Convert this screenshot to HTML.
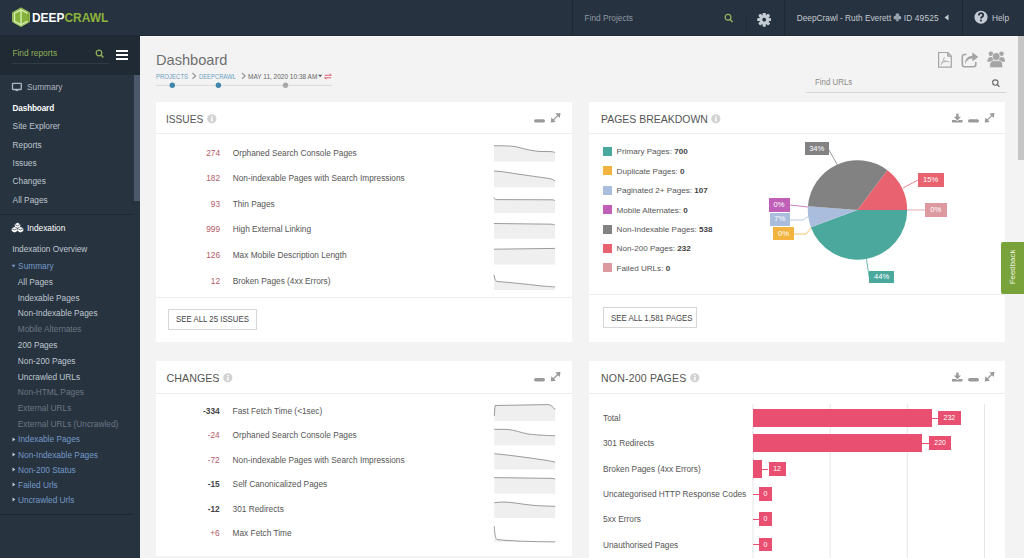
<!DOCTYPE html>
<html><head><meta charset="utf-8">
<style>
*{box-sizing:border-box;margin:0;padding:0}
html,body{width:1024px;height:558px;overflow:hidden;background:#f3f3f3;font-family:"Liberation Sans",sans-serif;position:relative}
.abs{position:absolute}
.t{position:absolute;white-space:nowrap;line-height:1}
svg{position:absolute;overflow:visible}
</style></head><body>
<div class="abs" style="left:0px;top:0px;width:1024px;height:36px;background:#26323f;"></div>
<div class="abs" style="left:0px;top:35px;width:1024px;height:1px;background:#222936;"></div>
<svg style="left:0;top:0" width="40" height="36">
<polygon points="21,7.9 29.4,12.6 29.4,21.8 21,26.5 12.6,21.8 12.6,12.6" fill="#79a332" stroke="#a3c963" stroke-width="1"/>
<polygon points="21,9.8 27.5,13.3 27.5,21.2 21,24.9 14.4,21.2 14.4,13.3" fill="#86b23c"/>
<path d="M27.6 13.4 L21 9.8 L14.4 13.4 L14.4 21.2 L21 24.9 L27.6 21.2" fill="none" stroke="#d3ecab" stroke-width="1.5"/>
<path d="M21 9.8 L21 24.9" stroke="#d3ecab" stroke-width="1.5"/>
</svg>
<div class="t" style="left:31.5px;top:12.00px;font-size:12.9px;color:#ffffff;font-weight:bold;transform:scaleX(0.925);transform-origin:0 0">DEEP<span style="color:#8db33a">CRAWL</span></div>
<div class="abs" style="left:572px;top:0px;width:1px;height:36px;background:#1e2831;"></div>
<div class="abs" style="left:746px;top:14px;width:1px;height:22px;background:#222c36;"></div>
<div class="abs" style="left:784px;top:0px;width:1px;height:36px;background:#1e2831;"></div>
<div class="abs" style="left:962px;top:0px;width:1px;height:36px;background:#1e2831;"></div>
<div class="t" style="left:584.6px;top:14.00px;font-size:8.3px;color:#8f98a2;font-weight:normal;">Find Projects</div>
<svg style="left:724px;top:13px" width="10" height="10" viewBox="0 0 10 10"><circle cx="4" cy="4.3" r="2.9" fill="none" stroke="#97b85e" stroke-width="1.2"/><path d="M6.1 6.4 L8.6 8.9" stroke="#97b85e" stroke-width="1.4"/></svg>
<svg style="left:0;top:0" width="1024" height="36"><g fill="#c3ccd5"><rect x="762.8" y="12.9" width="2.8" height="13.6" rx="0.6" transform="rotate(0 764.2 19.7)"/><rect x="762.8" y="12.9" width="2.8" height="13.6" rx="0.6" transform="rotate(45 764.2 19.7)"/><rect x="762.8" y="12.9" width="2.8" height="13.6" rx="0.6" transform="rotate(90 764.2 19.7)"/><rect x="762.8" y="12.9" width="2.8" height="13.6" rx="0.6" transform="rotate(135 764.2 19.7)"/><rect x="762.8" y="12.9" width="2.8" height="13.6" rx="0.6" transform="rotate(180 764.2 19.7)"/><rect x="762.8" y="12.9" width="2.8" height="13.6" rx="0.6" transform="rotate(225 764.2 19.7)"/><rect x="762.8" y="12.9" width="2.8" height="13.6" rx="0.6" transform="rotate(270 764.2 19.7)"/><rect x="762.8" y="12.9" width="2.8" height="13.6" rx="0.6" transform="rotate(315 764.2 19.7)"/><circle cx="764.2" cy="19.7" r="4.9"/></g><circle cx="764.2" cy="19.7" r="1.9" fill="#27323e"/></svg>
<div class="t" style="left:796.7px;top:14.00px;font-size:8.3px;color:#c3cad1;font-weight:normal;">DeepCrawl - Ruth Everett</div>
<svg style="left:0;top:0" width="1024" height="36"><g fill="#9aa4ae"><circle cx="897.4" cy="15.1" r="1.9"/><circle cx="895.4" cy="17.7" r="1.9"/><circle cx="899.4" cy="17.7" r="1.9"/><path d="M896.9 17 L897.9 17 L898.7 21.2 L896.1 21.2 Z"/></g></svg>
<div class="t" style="left:903.8px;top:14.00px;font-size:8.3px;color:#c3cad1;font-weight:normal;letter-spacing:0.15px">ID 49525</div>
<svg style="left:944px;top:14px" width="5" height="7" viewBox="0 0 5 7"><polygon points="4.5,0.5 4.5,6.5 0.5,3.5" fill="#c3cad1"/></svg>
<svg style="left:974px;top:10px" width="14" height="14" viewBox="0 0 14 14"><circle cx="7" cy="7.2" r="6.5" fill="#c3ccd5"/><path d="M4.9 5.4 Q4.9 3.2 7 3.2 Q9.2 3.2 9.2 5.2 Q9.2 6.5 7.7 7.1 Q7 7.4 7 8.6" fill="none" stroke="#27323e" stroke-width="1.8"/><rect x="6.1" y="9.6" width="1.8" height="1.8" fill="#27323e"/></svg>
<div class="t" style="left:992.0px;top:14.00px;font-size:8.3px;color:#c3cad1;font-weight:normal;">Help</div>
<div class="abs" style="left:0px;top:36px;width:140px;height:522px;background:#27333f;"></div>
<div class="abs" style="left:0px;top:36px;width:140px;height:39px;background:#1f2a34;"></div>
<div class="t" style="left:12.4px;top:49.00px;font-size:8.4px;color:#8fae58;font-weight:normal;">Find reports</div>
<svg style="left:95px;top:49px" width="10" height="10" viewBox="0 0 10 10"><circle cx="4" cy="4" r="2.8" fill="none" stroke="#97b85e" stroke-width="1.2"/><path d="M6 6 L8.4 8.4" stroke="#97b85e" stroke-width="1.4"/></svg>
<div class="abs" style="left:12px;top:63px;width:97px;height:1px;background:#2f3b47;"></div>
<div class="abs" style="left:116px;top:50px;width:12px;height:2px;background:#ffffff;"></div>
<div class="abs" style="left:116px;top:54px;width:12px;height:2px;background:#ffffff;"></div>
<div class="abs" style="left:116px;top:58px;width:12px;height:2px;background:#ffffff;"></div>
<div class="abs" style="left:134px;top:75px;width:6px;height:126px;background:#4b596b;"></div>
<svg style="left:11px;top:82px" width="12" height="10" viewBox="0 0 12 10"><rect x="1.5" y="1.4" width="8.8" height="6.1" rx="0.5" fill="none" stroke="#aeb8c2" stroke-width="1.3"/><rect x="4.6" y="7.6" width="2.6" height="1.5" fill="#aeb8c2"/></svg>
<div class="t" style="left:27.0px;top:83.00px;font-size:8.3px;color:#aeb7c0;font-weight:normal;">Summary</div>
<div class="t" style="left:12.6px;top:105.00px;font-size:8.2px;color:#ffffff;font-weight:bold;letter-spacing:-0.15px">Dashboard</div>
<div class="t" style="left:12.6px;top:122.00px;font-size:8.3px;color:#bfc7cf;font-weight:normal;">Site Explorer</div>
<div class="t" style="left:12.6px;top:141.00px;font-size:8.3px;color:#bfc7cf;font-weight:normal;">Reports</div>
<div class="t" style="left:12.6px;top:159.00px;font-size:8.3px;color:#bfc7cf;font-weight:normal;">Issues</div>
<div class="t" style="left:12.6px;top:177.00px;font-size:8.3px;color:#bfc7cf;font-weight:normal;">Changes</div>
<div class="t" style="left:12.6px;top:196.00px;font-size:8.3px;color:#bfc7cf;font-weight:normal;">All Pages</div>
<div class="abs" style="left:0px;top:214px;width:132px;height:1px;background:#1f2932;"></div>
<svg style="left:11px;top:222px" width="13" height="11" viewBox="0 0 13 11">
<path d="M6.5 0.8 L9.3 2.2 L9.3 4.6 L6.5 6 L3.7 4.6 L3.7 2.2 Z" fill="#fff"/>
<path d="M3.5 4.9 L6.4 6.3 L6.4 9 L3.5 10.4 L0.7 9 L0.7 6.3 Z" fill="#fff"/>
<path d="M9.5 4.9 L12.3 6.3 L12.3 9 L9.5 10.4 L6.6 9 L6.6 6.3 Z" fill="#fff"/>
<path d="M3.7 2.4 L6.5 3.8 L9.3 2.4 M0.7 6.5 L3.5 7.9 L6.4 6.5 M6.6 6.5 L9.5 7.9 L12.3 6.5" fill="none" stroke="#27333f" stroke-width="0.7"/>
</svg>
<div class="t" style="left:27.0px;top:224.00px;font-size:8.3px;color:#ffffff;font-weight:normal;">Indexation</div>
<div class="t" style="left:12.2px;top:245.00px;font-size:8.3px;color:#bfc7cf;font-weight:normal;">Indexation Overview</div>
<svg style="left:11px;top:264px" width="5" height="4" viewBox="0 0 5 4"><polygon points="0.5,0.8 4.5,0.8 2.5,3.4" fill="#7296c6"/></svg>
<div class="t" style="left:18.1px;top:262.00px;font-size:8.3px;color:#7599c9;font-weight:normal;">Summary</div>
<div class="t" style="left:17.8px;top:278.00px;font-size:8.3px;color:#bfc7cf;font-weight:normal;">All Pages</div>
<div class="t" style="left:17.8px;top:294.00px;font-size:8.3px;color:#bfc7cf;font-weight:normal;">Indexable Pages</div>
<div class="t" style="left:17.8px;top:309.00px;font-size:8.3px;color:#bfc7cf;font-weight:normal;">Non-Indexable Pages</div>
<div class="t" style="left:17.8px;top:325.00px;font-size:8.3px;color:#6c7784;font-weight:normal;">Mobile Alternates</div>
<div class="t" style="left:17.8px;top:341.00px;font-size:8.3px;color:#bfc7cf;font-weight:normal;">200 Pages</div>
<div class="t" style="left:17.8px;top:357.00px;font-size:8.3px;color:#bfc7cf;font-weight:normal;">Non-200 Pages</div>
<div class="t" style="left:17.8px;top:373.00px;font-size:8.3px;color:#bfc7cf;font-weight:normal;">Uncrawled URLs</div>
<div class="t" style="left:17.8px;top:388.00px;font-size:8.3px;color:#6c7784;font-weight:normal;">Non-HTML Pages</div>
<div class="t" style="left:17.8px;top:404.00px;font-size:8.3px;color:#6c7784;font-weight:normal;">External URLs</div>
<div class="t" style="left:17.8px;top:420.00px;font-size:8.3px;color:#6c7784;font-weight:normal;">External URLs (Uncrawled)</div>
<svg style="left:11.5px;top:436.6px" width="4" height="5" viewBox="0 0 4 5"><polygon points="0.5,0.5 3.3,2.5 0.5,4.5" fill="#c3ccd5"/></svg>
<div class="t" style="left:18.1px;top:435.00px;font-size:8.3px;color:#7599c9;font-weight:normal;">Indexable Pages</div>
<svg style="left:11.5px;top:452.0px" width="4" height="5" viewBox="0 0 4 5"><polygon points="0.5,0.5 3.3,2.5 0.5,4.5" fill="#c3ccd5"/></svg>
<div class="t" style="left:18.1px;top:451.00px;font-size:8.3px;color:#7599c9;font-weight:normal;">Non-Indexable Pages</div>
<svg style="left:11.5px;top:467.2px" width="4" height="5" viewBox="0 0 4 5"><polygon points="0.5,0.5 3.3,2.5 0.5,4.5" fill="#c3ccd5"/></svg>
<div class="t" style="left:18.1px;top:466.00px;font-size:8.3px;color:#7599c9;font-weight:normal;">Non-200 Status</div>
<svg style="left:11.5px;top:482.2px" width="4" height="5" viewBox="0 0 4 5"><polygon points="0.5,0.5 3.3,2.5 0.5,4.5" fill="#c3ccd5"/></svg>
<div class="t" style="left:18.1px;top:481.00px;font-size:8.3px;color:#7599c9;font-weight:normal;">Failed Urls</div>
<svg style="left:11.5px;top:497.4px" width="4" height="5" viewBox="0 0 4 5"><polygon points="0.5,0.5 3.3,2.5 0.5,4.5" fill="#c3ccd5"/></svg>
<div class="t" style="left:18.1px;top:496.00px;font-size:8.3px;color:#7599c9;font-weight:normal;">Uncrawled Urls</div>
<div class="abs" style="left:0px;top:514px;width:132px;height:1px;background:#1f2932;"></div>
<div class="t" style="left:156.0px;top:53.00px;font-size:14.6px;color:#707070;font-weight:normal;">Dashboard</div>
<div class="t" style="left:155.9px;top:74.00px;font-size:6.8px;color:#6b9ec0;font-weight:normal;transform:scaleX(0.885);transform-origin:0 0">PROJECTS</div>
<div class="t" style="left:198.8px;top:74.00px;font-size:6.8px;color:#6b9ec0;font-weight:normal;transform:scaleX(0.86);transform-origin:0 0">DEEPCRAWL</div>
<svg style="left:0;top:0" width="1024" height="100">
<path d="M192.5 73 L195.6 75.9 L192.5 78.8" fill="none" stroke="#999" stroke-width="1.3"/>
<path d="M242 73 L245.1 75.9 L242 78.8" fill="none" stroke="#999" stroke-width="1.3"/>
<polygon points="318.2,74.8 322.2,74.8 320.2,77.2" fill="#555"/>
<path d="M324.8 75.3 L331.2 75.3 M324.8 77.8 L331.2 77.8" stroke="#e06070" stroke-width="1.1"/>
<path d="M329.5 73.8 L331.6 75.3 M326.5 79.3 L324.4 77.8" stroke="#e06070" stroke-width="0.9"/>
<line x1="156" y1="85.3" x2="332" y2="85.3" stroke="#dedede" stroke-width="1.2"/>
<circle cx="172.3" cy="85.3" r="2.7" fill="#3f86ab"/>
<circle cx="218.4" cy="85.3" r="2.7" fill="#3f86ab"/>
<circle cx="285.5" cy="85.3" r="2.7" fill="#a8a8a8"/>
</svg>
<div class="t" style="left:247.9px;top:74.00px;font-size:6.8px;color:#666;font-weight:normal;transform:scaleX(0.955);transform-origin:0 0">MAY 11, 2020 10:38 AM</div>
<svg style="left:0;top:0" width="1024" height="100">
<path d="M938.6 52.5 L948 52.5 L951.3 56 L951.3 67.2 L938.6 67.2 Z" fill="none" stroke="#a5a5a5" stroke-width="1.2"/>
<path d="M947.6 52.5 L947.6 56.3 L951.3 56.3" fill="#bdbdbd" stroke="#a5a5a5" stroke-width="1"/>
<path d="M944.5 57 Q943 62 940.8 65 M944 60.5 Q947 62 949.5 62 M941.5 62.5 Q945 62 946.5 61" fill="none" stroke="#a5a5a5" stroke-width="0.8"/>
<path d="M966.5 54.5 L964.5 54.5 Q962.3 54.5 962.3 56.7 L962.3 64.6 Q962.3 66.8 964.5 66.8 L973.6 66.8 Q975.8 66.8 975.8 64.6 L975.8 62" fill="none" stroke="#a5a5a5" stroke-width="1.6"/>
<path d="M965 64.5 Q964.8 56.2 972.3 55.8 L972.3 52.3 L978.3 57 L972.3 61.6 L972.3 58.6 Q967.3 58.6 965 64.5 Z" fill="#a5a5a5"/>
<circle cx="990.9" cy="53.8" r="2.3" fill="#a5a5a5"/>
<circle cx="1001.5" cy="53.8" r="2.3" fill="#a5a5a5"/>
<path d="M987.3 61.8 Q987.3 57 990.9 57 Q993.5 57 994 59 L994 61.8 Z" fill="#a5a5a5"/>
<path d="M1005.1 61.8 Q1005.1 57 1001.5 57 Q998.9 57 998.4 59 L998.4 61.8 Z" fill="#a5a5a5"/>
<circle cx="996.2" cy="56.6" r="4.2" fill="#f3f3f3"/>
<circle cx="996.2" cy="56.6" r="3.5" fill="#a5a5a5"/>
<path d="M989.7 67.8 L989.7 65 Q989.7 60.6 994 60.6 L998.4 60.6 Q1002.7 60.6 1002.7 65 L1002.7 67.8 Z" fill="#a5a5a5" stroke="#f3f3f3" stroke-width="0.8"/>
<circle cx="995.3" cy="82.6" r="2.7" fill="none" stroke="#6a6a6a" stroke-width="1.1"/>
<path d="M997.3 84.6 L999.4 86.7" stroke="#6a6a6a" stroke-width="1.3"/>
</svg>
<div class="t" style="left:814.5px;top:78.00px;font-size:8.3px;color:#8a8a8a;font-weight:normal;transform:scaleX(0.95);transform-origin:0 0">Find URLs</div>
<div class="abs" style="left:806px;top:92px;width:200px;height:1px;background:#d4d4d4;"></div>
<div class="abs" style="left:140px;top:36px;width:884px;height:1px;background:#f8f9fb;"></div>
<div class="abs" style="left:1018px;top:36px;width:6px;height:124px;background:#c6c6c6;"></div>

<div class="abs" style="left:156px;top:102px;width:416px;height:240px;background:#ffffff;"></div>
<div class="abs" style="left:156px;top:133px;width:416px;height:1px;background:#ececec;"></div>
<div class="t" style="left:166.3px;top:114.00px;font-size:10.7px;color:#555;font-weight:normal;transform:scaleX(0.95);transform-origin:0 0">ISSUES</div>
<svg style="left:207px;top:114.2px" width="10" height="10" viewBox="0 0 10 10"><circle cx="4.8" cy="4.8" r="4.6" fill="#d2d2d2"/><rect x="4.1" y="4" width="1.5" height="3.6" fill="#fff"/><rect x="4.1" y="2" width="1.5" height="1.3" fill="#fff"/></svg>
<svg style="left:0;top:0" width="1024" height="558"><g fill="#9a9a9a"><rect x="534" y="119.2" width="11" height="3.4" rx="1.7"/><path d="M552.2 121.1 L559.0 114.4" stroke="#9a9a9a" stroke-width="1.3"/><polygon points="560.5,112.9 555.3,113.6 559.8,118.1"/><polygon points="550.7,122.6 555.9,121.9 551.4,117.4"/></g></svg>
<div class="t" style="right:804.0px;top:149.00px;font-size:8.3px;color:#b25a68;font-weight:normal;">274</div>
<div class="t" style="left:232.7px;top:149.00px;font-size:8.3px;color:#555;font-weight:normal;">Orphaned Search Console Pages</div>
<div class="t" style="right:804.0px;top:174.00px;font-size:8.3px;color:#b25a68;font-weight:normal;">182</div>
<div class="t" style="left:232.7px;top:174.00px;font-size:8.3px;color:#555;font-weight:normal;">Non-indexable Pages with Search Impressions</div>
<div class="t" style="right:804.0px;top:200.00px;font-size:8.3px;color:#b25a68;font-weight:normal;">93</div>
<div class="t" style="left:232.7px;top:200.00px;font-size:8.3px;color:#555;font-weight:normal;">Thin Pages</div>
<div class="t" style="right:804.0px;top:225.00px;font-size:8.3px;color:#b25a68;font-weight:normal;">999</div>
<div class="t" style="left:232.7px;top:225.00px;font-size:8.3px;color:#555;font-weight:normal;">High External Linking</div>
<div class="t" style="right:804.0px;top:251.00px;font-size:8.3px;color:#b25a68;font-weight:normal;">126</div>
<div class="t" style="left:232.7px;top:251.00px;font-size:8.3px;color:#555;font-weight:normal;">Max Mobile Description Length</div>
<div class="t" style="right:804.0px;top:277.00px;font-size:8.3px;color:#b25a68;font-weight:normal;">12</div>
<div class="t" style="left:232.7px;top:277.00px;font-size:8.3px;color:#555;font-weight:normal;">Broken Pages (4xx Errors)</div>
<svg style="left:0;top:0" width="1024" height="558"><path d="M494 145.8 C505 145.6 512 146 517 147 C525 149 532 151 540 151.5 L551 151.6 C553 151.7 554 152.2 555 152.6 L555 161.5 L494 161.5 Z" fill="#efefef"/><path d="M494 145.8 C505 145.6 512 146 517 147 C525 149 532 151 540 151.5 L551 151.6 C553 151.7 554 152.2 555 152.6" fill="none" stroke="#9b9b9b" stroke-width="1"/><path d="M494 171.1 C502 171.3 510 173 521 174.5 C533 176.3 543 177.5 549 178.5 C552 179 554 180 555 181 L555 187.3 L494 187.3 Z" fill="#efefef"/><path d="M494 171.1 C502 171.3 510 173 521 174.5 C533 176.3 543 177.5 549 178.5 C552 179 554 180 555 181" fill="none" stroke="#9b9b9b" stroke-width="1"/><path d="M494 197.4 C494.5 199 495 199.5 497 199.6 L552 199.8 C553.5 199.9 554.5 200.3 555 200.7 L555 213 L494 213 Z" fill="#efefef"/><path d="M494 197.4 C494.5 199 495 199.5 497 199.6 L552 199.8 C553.5 199.9 554.5 200.3 555 200.7" fill="none" stroke="#9b9b9b" stroke-width="1"/><path d="M494 223.5 L552 224.2 C553.5 224.5 554.3 224.9 555 225.1 L555 238.7 L494 238.7 Z" fill="#efefef"/><path d="M494 223.5 L552 224.2 C553.5 224.5 554.3 224.9 555 225.1" fill="none" stroke="#9b9b9b" stroke-width="1"/><path d="M494 249.2 L555 248.4 L555 264.4 L494 264.4 Z" fill="#efefef"/><path d="M494 249.2 L555 248.4" fill="none" stroke="#9b9b9b" stroke-width="1"/><path d="M494 274.7 C494.6 278 495 281 497 281.5 C510 282.5 525 284 540 285.8 C548 286.5 552 286.7 555 286.9 L555 290 L494 290 Z" fill="#efefef"/><path d="M494 274.7 C494.6 278 495 281 497 281.5 C510 282.5 525 284 540 285.8 C548 286.5 552 286.7 555 286.9" fill="none" stroke="#9b9b9b" stroke-width="1"/></svg>
<div class="abs" style="left:156px;top:297px;width:416px;height:1px;background:#ededed;"></div>
<div class="abs" style="left:168px;top:309px;width:89px;height:21px;background:#ffffff;border:1px solid #d6d6d6"></div>
<div class="t" style="left:176.3px;top:315.00px;font-size:8.6px;color:#444;font-weight:normal;transform:scaleX(0.913);transform-origin:0 0">SEE ALL 25 ISSUES</div>
<div class="abs" style="left:589px;top:102px;width:416px;height:240px;background:#ffffff;"></div>
<div class="abs" style="left:589px;top:133px;width:416px;height:1px;background:#ececec;"></div>
<div class="t" style="left:600.8px;top:114.00px;font-size:10.7px;color:#555;font-weight:normal;transform:scaleX(0.98);transform-origin:0 0">PAGES BREAKDOWN</div>
<svg style="left:711px;top:114.2px" width="10" height="10" viewBox="0 0 10 10"><circle cx="4.8" cy="4.8" r="4.6" fill="#d2d2d2"/><rect x="4.1" y="4" width="1.5" height="3.6" fill="#fff"/><rect x="4.1" y="2" width="1.5" height="1.3" fill="#fff"/></svg>
<svg style="left:0;top:0" width="1024" height="558"><g fill="#9a9a9a"><rect x="968" y="119.2" width="11" height="3.4" rx="1.7"/><path d="M986.2 121.1 L993.0 114.4" stroke="#9a9a9a" stroke-width="1.3"/><polygon points="994.5,112.9 989.3,113.6 993.8,118.1"/><polygon points="984.7,122.6 989.9,121.9 985.4,117.4"/><rect x="956.2" y="113.7" width="2.4" height="4.5"/><polygon points="953.8,116.7 961.0,116.7 957.4,120.4"/><path d="M952.0 120.1 L956.0 120.1 L957.4 121.3 L958.8 120.1 L962.5 120.1 L962.5 122.6 L952.0 122.6 Z"/></g></svg>
<div class="abs" style="left:602.5px;top:146.9px;width:9px;height:9px;background:#4ba89c;"></div>
<div class="t" style="left:616.6px;top:148.00px;font-size:8.1px;color:#555;font-weight:normal;">Primary Pages: <b style="color:#444">700</b></div>
<div class="abs" style="left:602.5px;top:166.3px;width:9px;height:9px;background:#f2b43f;"></div>
<div class="t" style="left:616.6px;top:168.00px;font-size:8.1px;color:#555;font-weight:normal;">Duplicate Pages: <b style="color:#444">0</b></div>
<div class="abs" style="left:602.5px;top:185.7px;width:9px;height:9px;background:#abbddd;"></div>
<div class="t" style="left:616.6px;top:187.00px;font-size:8.1px;color:#555;font-weight:normal;">Paginated 2+ Pages: <b style="color:#444">107</b></div>
<div class="abs" style="left:602.5px;top:205.1px;width:9px;height:9px;background:#c05fb8;"></div>
<div class="t" style="left:616.6px;top:207.00px;font-size:8.1px;color:#555;font-weight:normal;">Mobile Alternates: <b style="color:#444">0</b></div>
<div class="abs" style="left:602.5px;top:224.5px;width:9px;height:9px;background:#828282;"></div>
<div class="t" style="left:616.6px;top:226.00px;font-size:8.1px;color:#555;font-weight:normal;">Non-Indexable Pages: <b style="color:#444">538</b></div>
<div class="abs" style="left:602.5px;top:243.9px;width:9px;height:9px;background:#e8636f;"></div>
<div class="t" style="left:616.6px;top:245.00px;font-size:8.1px;color:#555;font-weight:normal;">Non-200 Pages: <b style="color:#444">232</b></div>
<div class="abs" style="left:602.5px;top:263.3px;width:9px;height:9px;background:#dc9aa0;"></div>
<div class="t" style="left:616.6px;top:265.00px;font-size:8.1px;color:#555;font-weight:normal;">Failed URLs: <b style="color:#444">0</b></div>
<svg style="left:0;top:0" width="1024" height="558"><path d="M857.5 210 L907.20 210.00 A49.7 49.7 0 0 1 810.86 227.16 Z" fill="#4ba89c"/><path d="M857.5 210 L810.86 227.16 A49.7 49.7 0 0 1 807.93 206.34 Z" fill="#abbddd"/><path d="M857.5 210 L807.93 206.34 A49.7 49.7 0 0 1 887.44 170.33 Z" fill="#828282"/><path d="M857.5 210 L887.44 170.33 A49.7 49.7 0 0 1 907.20 210.00 Z" fill="#e8636f"/><path d="M829 150 L838 166" stroke="#828282" stroke-width="0.8" fill="none"/><path d="M918 180 L903 188" stroke="#e8636f" stroke-width="0.8" fill="none"/><path d="M907 210 L925 210" stroke="#dc9aa0" stroke-width="0.8" fill="none"/><path d="M790 205 L808 207" stroke="#c05fb8" stroke-width="0.8" fill="none"/><path d="M790 220 L803 220 L809 216" stroke="#abbddd" stroke-width="0.8" fill="none"/><path d="M794 234 L806 234 L811 228" stroke="#f2b43f" stroke-width="0.8" fill="none"/><path d="M866.5 259 L869 277" stroke="#4ba89c" stroke-width="0.8" fill="none"/></svg>
<div class="abs" style="left:804.5px;top:142px;width:24.5px;height:13px;background:#828282;"></div>
<div class="t" style="left:804.5px;top:142px;width:24.5px;height:13px;line-height:13px;text-align:center;font-size:7.6px;color:#fff">34%</div>
<div class="abs" style="left:917.8px;top:173px;width:25.8px;height:13.5px;background:#e8636f;"></div>
<div class="t" style="left:917.8px;top:173px;width:25.8px;height:13.5px;line-height:13.5px;text-align:center;font-size:7.6px;color:#fff">15%</div>
<div class="abs" style="left:925px;top:203px;width:21.5px;height:13.6px;background:#dc9aa0;"></div>
<div class="t" style="left:925px;top:203px;width:21.5px;height:13.6px;line-height:13.6px;text-align:center;font-size:7.6px;color:#fff">0%</div>
<div class="abs" style="left:768.6px;top:198px;width:21px;height:13.8px;background:#c05fb8;"></div>
<div class="t" style="left:768.6px;top:198px;width:21px;height:13.8px;line-height:13.8px;text-align:center;font-size:7.6px;color:#fff">0%</div>
<div class="abs" style="left:769.5px;top:213.2px;width:20.5px;height:12.8px;background:#abbddd;"></div>
<div class="t" style="left:769.5px;top:213.2px;width:20.5px;height:12.8px;line-height:12.8px;text-align:center;font-size:7.6px;color:#fff">7%</div>
<div class="abs" style="left:773px;top:227px;width:21px;height:13px;background:#f2b43f;"></div>
<div class="t" style="left:773px;top:227px;width:21px;height:13px;line-height:13px;text-align:center;font-size:7.6px;color:#fff">0%</div>
<div class="abs" style="left:869px;top:270.6px;width:25.3px;height:12.9px;background:#4ba89c;"></div>
<div class="t" style="left:869px;top:270.6px;width:25.3px;height:12.9px;line-height:12.9px;text-align:center;font-size:7.6px;color:#fff">44%</div>
<div class="abs" style="left:589px;top:294px;width:416px;height:1px;background:#ededed;"></div>
<div class="abs" style="left:603px;top:307px;width:94px;height:21px;background:#ffffff;border:1px solid #d6d6d6"></div>
<div class="t" style="left:610.7px;top:314.00px;font-size:8.6px;color:#444;font-weight:normal;transform:scaleX(0.913);transform-origin:0 0">SEE ALL 1,581 PAGES</div>
<div class="abs" style="left:156px;top:361px;width:416px;height:195px;background:#ffffff;"></div>
<div class="abs" style="left:156px;top:393px;width:416px;height:1px;background:#ececec;"></div>
<div class="t" style="left:166.6px;top:373.00px;font-size:10.7px;color:#555;font-weight:normal;transform:scaleX(1.0);transform-origin:0 0">CHANGES</div>
<svg style="left:222.6px;top:373.4px" width="10" height="10" viewBox="0 0 10 10"><circle cx="4.8" cy="4.8" r="4.6" fill="#d2d2d2"/><rect x="4.1" y="4" width="1.5" height="3.6" fill="#fff"/><rect x="4.1" y="2" width="1.5" height="1.3" fill="#fff"/></svg>
<svg style="left:0;top:0" width="1024" height="558"><g fill="#9a9a9a"><rect x="534" y="378.1" width="11" height="3.4" rx="1.7"/><path d="M552.2 380.0 L559.0 373.3" stroke="#9a9a9a" stroke-width="1.3"/><polygon points="560.5,371.8 555.3,372.5 559.8,377.0"/><polygon points="550.7,381.5 555.9,380.8 551.4,376.3"/></g></svg>
<div class="t" style="right:804.3px;top:407.00px;font-size:8.3px;color:#444;font-weight:bold;">-334</div>
<div class="t" style="left:232.6px;top:407.00px;font-size:8.3px;color:#555;font-weight:normal;">Fast Fetch Time (&lt;1sec)</div>
<div class="t" style="right:804.3px;top:431.00px;font-size:8.3px;color:#b25a68;font-weight:normal;">-24</div>
<div class="t" style="left:232.6px;top:431.00px;font-size:8.3px;color:#555;font-weight:normal;">Orphaned Search Console Pages</div>
<div class="t" style="right:804.3px;top:456.00px;font-size:8.3px;color:#b25a68;font-weight:normal;">-72</div>
<div class="t" style="left:232.6px;top:456.00px;font-size:8.3px;color:#555;font-weight:normal;">Non-indexable Pages with Search Impressions</div>
<div class="t" style="right:804.3px;top:480.00px;font-size:8.3px;color:#444;font-weight:bold;">-15</div>
<div class="t" style="left:232.6px;top:480.00px;font-size:8.3px;color:#555;font-weight:normal;">Self Canonicalized Pages</div>
<div class="t" style="right:804.3px;top:505.00px;font-size:8.3px;color:#444;font-weight:bold;">-12</div>
<div class="t" style="left:232.6px;top:505.00px;font-size:8.3px;color:#555;font-weight:normal;">301 Redirects</div>
<div class="t" style="right:804.3px;top:529.00px;font-size:8.3px;color:#b25a68;font-weight:normal;">+6</div>
<div class="t" style="left:232.6px;top:529.00px;font-size:8.3px;color:#555;font-weight:normal;">Max Fetch Time</div>
<svg style="left:0;top:0" width="1024" height="558"><path d="M494.3 416 L495 405.5 L548 404.6 C551 405 553 407 555.2 409.6 L555.2 421 L494.3 421 Z" fill="#efefef"/><path d="M494.3 416 L495 405.5 L548 404.6 C551 405 553 407 555.2 409.6" fill="none" stroke="#9b9b9b" stroke-width="1"/><path d="M494.3 429.3 L507 429.4 C515 430 520 432.5 528 434 C540 435.3 548 435.5 555.2 435.8 L555.2 445.3 L494.3 445.3 Z" fill="#efefef"/><path d="M494.3 429.3 L507 429.4 C515 430 520 432.5 528 434 C540 435.3 548 435.5 555.2 435.8" fill="none" stroke="#9b9b9b" stroke-width="1"/><path d="M494.3 453.7 C510 455 530 458 546 460.3 C550 461 553 461.5 555.2 462.3 L555.2 469.5 L494.3 469.5 Z" fill="#efefef"/><path d="M494.3 453.7 C510 455 530 458 546 460.3 C550 461 553 461.5 555.2 462.3" fill="none" stroke="#9b9b9b" stroke-width="1"/><path d="M494.3 477.6 L552 478.4 C553.5 478.6 554.5 478.8 555.2 479 L555.2 493.8 L494.3 493.8 Z" fill="#efefef"/><path d="M494.3 477.6 L552 478.4 C553.5 478.6 554.5 478.8 555.2 479" fill="none" stroke="#9b9b9b" stroke-width="1"/><path d="M494.3 502.8 C500 501.8 507 501.8 515 503 C525 504.5 535 505.8 545 506 L555.2 506.3 L555.2 518 L494.3 518 Z" fill="#efefef"/><path d="M494.3 502.8 C500 501.8 507 501.8 515 503 C525 504.5 535 505.8 545 506 L555.2 506.3" fill="none" stroke="#9b9b9b" stroke-width="1"/><path d="M494.3 526.3 C494.6 532 495 538 497 539.5 C510 541 530 541.7 555.2 541.9 L555.2 542 L494.3 542 Z" fill="#efefef"/><path d="M494.3 526.3 C494.6 532 495 538 497 539.5 C510 541 530 541.7 555.2 541.9" fill="none" stroke="#9b9b9b" stroke-width="1"/></svg>
<div class="abs" style="left:589px;top:361px;width:416px;height:197px;background:#ffffff;"></div>
<div class="abs" style="left:589px;top:393px;width:416px;height:1px;background:#ececec;"></div>
<div class="t" style="left:600.9px;top:373.00px;font-size:10.7px;color:#555;font-weight:normal;letter-spacing:0.2px;transform:scaleX(0.985);transform-origin:0 0">NON-200 PAGES</div>
<svg style="left:690px;top:373.4px" width="10" height="10" viewBox="0 0 10 10"><circle cx="4.8" cy="4.8" r="4.6" fill="#d2d2d2"/><rect x="4.1" y="4" width="1.5" height="3.6" fill="#fff"/><rect x="4.1" y="2" width="1.5" height="1.3" fill="#fff"/></svg>
<svg style="left:0;top:0" width="1024" height="558"><g fill="#9a9a9a"><rect x="968" y="378.1" width="11" height="3.4" rx="1.7"/><path d="M986.2 380.0 L993.0 373.3" stroke="#9a9a9a" stroke-width="1.3"/><polygon points="994.5,371.8 989.3,372.5 993.8,377.0"/><polygon points="984.7,381.5 989.9,380.8 985.4,376.3"/><rect x="956.2" y="372.6" width="2.4" height="4.5"/><polygon points="953.8,375.6 961.0,375.6 957.4,379.3"/><path d="M952.0 379.0 L956.0 379.0 L957.4 380.2 L958.8 379.0 L962.5 379.0 L962.5 381.5 L952.0 381.5 Z"/></g></svg>
<svg style="left:0;top:0" width="1024" height="558"><line x1="753" y1="404" x2="753" y2="558" stroke="#e6e6e6" stroke-width="1"/><line x1="830.2" y1="404" x2="830.2" y2="558" stroke="#e6e6e6" stroke-width="1"/><line x1="907.3" y1="404" x2="907.3" y2="558" stroke="#e6e6e6" stroke-width="1"/><line x1="984.5" y1="404" x2="984.5" y2="558" stroke="#e6e6e6" stroke-width="1"/></svg>
<div class="t" style="left:603.0px;top:414.00px;font-size:8.3px;color:#555;font-weight:normal;">Total</div>
<div class="abs" style="left:753px;top:409.1px;width:179.2px;height:17.9px;background:#e94f70;"></div>
<div class="abs" style="left:932.2px;top:417.9px;width:5.6px;height:1px;background:#e94f70;"></div>
<div class="abs" style="left:937.8px;top:411.4px;width:23.2px;height:13.6px;background:#e94f70;"></div>
<div class="t" style="left:937.8px;top:411.4px;width:23.2px;height:13.6px;line-height:13.6px;text-align:center;font-size:7px;color:#fff">232</div>
<div class="t" style="left:603.0px;top:439.00px;font-size:8.3px;color:#555;font-weight:normal;">301 Redirects</div>
<div class="abs" style="left:753px;top:434.0px;width:169.3px;height:17.9px;background:#e94f70;"></div>
<div class="abs" style="left:922.3px;top:442.8px;width:6.5px;height:1px;background:#e94f70;"></div>
<div class="abs" style="left:928.8px;top:436.3px;width:22.7px;height:13.6px;background:#e94f70;"></div>
<div class="t" style="left:928.8px;top:436.3px;width:22.7px;height:13.6px;line-height:13.6px;text-align:center;font-size:7px;color:#fff">220</div>
<div class="t" style="left:603.0px;top:465.00px;font-size:8.3px;color:#555;font-weight:normal;">Broken Pages (4xx Errors)</div>
<div class="abs" style="left:753px;top:460.1px;width:8.6px;height:17.9px;background:#e94f70;"></div>
<div class="abs" style="left:761.6px;top:468.9px;width:6.9px;height:1px;background:#e94f70;"></div>
<div class="abs" style="left:768.5px;top:462.4px;width:17.1px;height:13.6px;background:#e94f70;"></div>
<div class="t" style="left:768.5px;top:462.4px;width:17.1px;height:13.6px;line-height:13.6px;text-align:center;font-size:7px;color:#fff">12</div>
<div class="t" style="left:603.0px;top:490.00px;font-size:8.3px;color:#555;font-weight:normal;">Uncategorised HTTP Response Codes</div>
<div class="abs" style="left:753px;top:493.8px;width:5.6px;height:1px;background:#e94f70;"></div>
<div class="abs" style="left:758.6px;top:487.3px;width:13.7px;height:13.6px;background:#e94f70;"></div>
<div class="t" style="left:758.6px;top:487.3px;width:13.7px;height:13.6px;line-height:13.6px;text-align:center;font-size:7px;color:#fff">0</div>
<div class="t" style="left:603.0px;top:515.00px;font-size:8.3px;color:#555;font-weight:normal;">5xx Errors</div>
<div class="abs" style="left:753px;top:518.7px;width:5.6px;height:1px;background:#e94f70;"></div>
<div class="abs" style="left:758.6px;top:512.2px;width:13.7px;height:13.6px;background:#e94f70;"></div>
<div class="t" style="left:758.6px;top:512.2px;width:13.7px;height:13.6px;line-height:13.6px;text-align:center;font-size:7px;color:#fff">0</div>
<div class="t" style="left:603.0px;top:541.00px;font-size:8.3px;color:#555;font-weight:normal;">Unauthorised Pages</div>
<div class="abs" style="left:753px;top:544.0px;width:5.6px;height:1px;background:#e94f70;"></div>
<div class="abs" style="left:758.6px;top:537.5px;width:13.7px;height:13.6px;background:#e94f70;"></div>
<div class="t" style="left:758.6px;top:537.5px;width:13.7px;height:13.6px;line-height:13.6px;text-align:center;font-size:7px;color:#fff">0</div>
<div class="abs" style="left:1001px;top:242px;width:23px;height:52px;background:#7aa23a;border-radius:2px 0 0 2px"></div>
<div class="t" style="left:1013px;top:267px;font-size:7.9px;color:#eef4e4;transform:translate(-50%,-50%) rotate(-90deg)">Feedback</div>

</body></html>
